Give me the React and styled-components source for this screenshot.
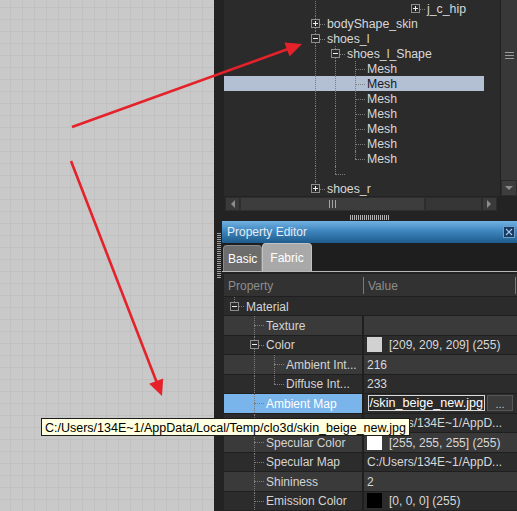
import React from 'react';
import styled, { createGlobalStyle } from 'styled-components';

const DOT = '#7d7d7d';

const GlobalStyle = createGlobalStyle`
    html, body {
        margin: 0;
        padding: 0;
    }
    body {
        background: #232323;
        font-family: "Liberation Sans", Arial, sans-serif;
        overflow: hidden;
    }
`;

const Screen = styled.div`
    position: relative;
    display: flex;
    width: 517px;
    height: 511px;
    overflow: hidden;
    background: #232323;
`;

const Canvas = styled.div`
    flex: none;
    width: 214px;
    background-color: #c9c9c9;
    background-image: linear-gradient(to right, #c1c1c1 1px, transparent 1px),
        linear-gradient(to bottom, #c1c1c1 1px, transparent 1px);
    background-size: 12px 12px;
    background-position: 10px 7px;
`;

const VSplitter = styled.div`
    flex: none;
    width: 8px;
    display: flex;
    align-items: center;
    padding-left: 3px;
    box-sizing: border-box;

    .grip {
        width: 4px;
        height: 46px;
        background: repeating-linear-gradient(to bottom, #a0a0a0 0 1px, transparent 1px 2px);
    }
`;

const Side = styled.div`
    flex: none;
    width: 295px;
    display: flex;
    flex-direction: column;
`;

/* ---------- tree ---------- */

const TreePanel = styled.div`
    flex: none;
    height: 212px;
    margin-left: 2px;
    display: flex;
    flex-direction: column;
`;

const TreeBody = styled.div`
    display: flex;
    height: 196px;
`;

const TreeView = styled.div`
    width: 276px;
    padding-top: 1px;
    box-sizing: border-box;
    background: #2b2b2b;
    overflow: hidden;
`;

const TreeRow = styled.div`
    display: flex;
    align-items: stretch;
    width: 260px;
    height: 15px;
    padding-left: 81px;
    box-sizing: border-box;
    background: ${(p) => (p.$selected ? '#b3bfd2' : 'transparent')};
    color: ${(p) => (p.$selected ? '#141a28' : '#d8d8d8')};
    font-size: 12.3px;
    line-height: 15px;
    white-space: nowrap;
`;

const Guide = styled.span`
    position: relative;
    flex: none;
    width: 20px;
    display: flex;
    align-items: center;

    &::before {
        content: '';
        display: ${(p) => (p.$up || p.$down ? 'block' : 'none')};
        position: absolute;
        left: 10px;
        top: ${(p) => (p.$up ? '0' : '50%')};
        bottom: ${(p) => (p.$down ? '0' : '50%')};
        border-left: 1px dotted ${DOT};
    }

    &::after {
        content: '';
        display: ${(p) => (p.$branch ? 'block' : 'none')};
        position: absolute;
        left: 10px;
        width: 10px;
        top: 50%;
        border-top: 1px dotted ${DOT};
    }
`;

const ToggleBox = styled.span`
    position: relative;
    z-index: 1;
    margin-left: 6px;
    width: 9px;
    height: 9px;
    box-sizing: border-box;
    border: 1px solid #8e8e8e;
    background: ${(p) => p.$bg};
    display: flex;

    svg {
        display: block;
    }
`;

const Label = styled.span`
    padding-left: 2px;
    padding-top: 1px;
    display: flex;
    align-items: center;
`;

const VScroll = styled.div`
    width: 17px;
    box-sizing: border-box;
    border-left: 1px solid #202020;
    background: #383838;
    display: flex;
    flex-direction: column;

    .thumb {
        flex: 1;
        display: flex;
        justify-content: center;
        padding-top: 52px;
    }

    .lines {
        width: 9px;
        height: 7px;
        background: repeating-linear-gradient(to bottom, #9a9a9a 0 1px, transparent 1px 3px);
    }

    .down {
        height: 14px;
        border: 1px solid #2b2b2b;
        background: #3d3d3d;
        display: flex;
        align-items: center;
        justify-content: center;
    }
`;

const HScroll = styled.div`
    display: flex;
    width: 272px;
    height: 14px;
    margin: 1px 0 0 1px;

    .btn {
        flex: none;
        width: 15px;
        background: #3a3a3a;
        border: 1px solid #2c2c2c;
        box-sizing: border-box;
        display: flex;
        align-items: center;
        justify-content: center;
    }

    .thumb {
        flex: none;
        width: 185px;
        background: #3d3d3d;
        border: 1px solid #2e2e2e;
        box-sizing: border-box;
        display: flex;
        align-items: center;
        justify-content: center;
    }

    .grip {
        width: 7px;
        height: 8px;
        background: repeating-linear-gradient(to right, #a5a5a5 0 1px, transparent 1px 3px);
    }

    .track {
        flex: 1;
        background: #363636;
        border: 1px solid #2c2c2c;
        box-sizing: border-box;
    }
`;

const HSplitter = styled.div`
    flex: none;
    height: 9px;
    display: flex;
    justify-content: center;
    padding-top: 3px;
    box-sizing: border-box;

    .grip {
        width: 39px;
        height: 5px;
        background: repeating-linear-gradient(to right, #b0b0b0 0 1px, transparent 1px 2px);
    }
`;

/* ---------- property editor ---------- */

const TitleBar = styled.div`
    flex: none;
    height: 22px;
    display: flex;
    align-items: center;
    justify-content: space-between;
    padding: 0 2px 0 5px;
    background: linear-gradient(to bottom, #72b2e3 0%, #3f86bf 45%, #1d5c8c 100%);
    color: #e4edf5;
    font-size: 12px;
`;

const CloseButton = styled.span`
    width: 12px;
    height: 12px;
    box-sizing: border-box;
    border: 1px solid #6f9ec6;
    background: #183a60;
    display: flex;
    align-items: center;
    justify-content: center;
`;

const TabStrip = styled.div`
    flex: none;
    height: 28px;
    display: flex;
    align-items: flex-end;
    padding-left: 1px;
    background: #1e1e1e;
    border-bottom: 1px solid #b8b8b8;
`;

const Tab = styled.div`
    box-sizing: border-box;
    height: ${(p) => (p.$active ? 28 : 26)}px;
    padding: 0 ${(p) => (p.$active ? 7 : 4)}px;
    display: flex;
    align-items: center;
    border: 1px solid ${(p) => (p.$active ? '#c2c2c2' : '#8a8a8a')};
    border-bottom: none;
    border-radius: 4px 4px 0 0;
    background: ${(p) => (p.$active ? '#a9a9a9' : '#6c6c6c')};
    color: #ffffff;
    font-size: 12px;
`;

const Table = styled.div`
    margin: 2px 0 0 2px;
    display: flex;
    flex-direction: column;
    gap: 1px;
    background: #1f1f1f;
    font-size: 12px;
`;

const HeaderRow = styled.div`
    height: 22px;
    display: flex;
    align-items: center;
    background: #323232;
    color: #8d8d8d;

    .cell {
        display: flex;
        align-items: center;
        padding: 1px 0 0 4px;
        box-sizing: border-box;
    }
    .rule {
        width: 1px;
        height: 17px;
        background: #7a7a7a;
    }
`;

const MaterialRow = styled.div`
    display: flex;
    align-items: stretch;
    height: 18px;
    background: #2b2b2b;
    color: #d6d6d6;
`;

const PropRow = styled.div`
    display: grid;
    grid-template-columns: 138px 1fr;
    column-gap: 2px;
    height: 18.5px;
`;

const TONES = {
    light: '#3a3a3a',
    dark: '#2c2c2c',
    selected: '#79b5ea',
};

const LabelCell = styled.div`
    display: flex;
    align-items: stretch;
    overflow: hidden;
    white-space: nowrap;
    background: ${(p) => TONES[p.$tone]};
    color: ${(p) => (p.$tone === 'selected' ? '#ffffff' : '#d4d4d4')};
`;

const ValueCell = styled.div`
    display: flex;
    align-items: center;
    gap: 7px;
    padding: 1px 0 0 3px;
    overflow: hidden;
    white-space: nowrap;
    background: ${(p) => (p.$tone === 'selected' ? '#2c2c2c' : TONES[p.$tone])};
    color: #d8d8d8;
`;

const Swatch = styled.span`
    flex: none;
    width: 15px;
    height: 15px;
    margin-top: -1px;
    background: ${(p) => p.$color};
`;

const Editor = styled.div`
    display: flex;
    align-items: center;
    gap: 2px;
    margin: -1px 0 0 1px;

    .input {
        width: 117px;
        height: 16px;
        box-sizing: border-box;
        border: 1px solid #d9d9d9;
        background: #2a2a2a;
        color: #ffffff;
        display: flex;
        justify-content: flex-end;
        align-items: center;
        overflow: hidden;
        padding-right: 1px;
        font-size: 12.6px;
    }

    .browse {
        width: 26px;
        height: 16px;
        box-sizing: border-box;
        border: 1px solid #575757;
        background: #3b3b3b;
        color: #c8c8c8;
        display: flex;
        align-items: flex-end;
        justify-content: center;
        line-height: 12px;
        font-size: 11px;
    }
`;

const Tooltip = styled.div`
    position: absolute;
    z-index: 3;
    left: 41px;
    top: 418px;
    height: 18px;
    box-sizing: border-box;
    padding: 1px 3px 0;
    display: flex;
    align-items: center;
    border: 1px solid #1c1c1c;
    background: #ffffe1;
    color: #000000;
    font-size: 12.5px;
    white-space: nowrap;
`;

const Arrows = styled.svg`
    position: absolute;
    z-index: 4;
    left: 0;
    top: 0;
    width: 517px;
    height: 511px;
    pointer-events: none;
`;

/* ---------- data ---------- */

const pass = { up: true, down: true };
const empty = {};

const TREE = [
    { guides: [pass, empty, empty, empty, empty], node: { branch: true }, toggle: 'plus', label: 'j_c_hip' },
    { guides: [], node: { up: true, down: true, branch: true }, toggle: 'plus', label: 'bodyShape_skin' },
    { guides: [], node: { up: true, down: true, branch: true }, toggle: 'minus', label: 'shoes_l' },
    { guides: [pass], node: { up: true, down: true, branch: true }, toggle: 'minus', label: 'shoes_l_Shape' },
    ...Array.from({ length: 7 }, (_, i) => ({
        guides: [pass, pass],
        node: { up: true, down: i < 6, branch: true },
        label: 'Mesh',
        selected: i === 1,
    })),
    { guides: [pass], node: { up: true, branch: true }, label: '' },
    { guides: [], node: { up: true, branch: true }, toggle: 'plus', label: 'shoes_r' },
];

const tee = { up: true, down: true, branch: true };
const last = { up: true, branch: true };

const PROPS = [
    { id: 'texture', label: 'Texture', guides: [empty], node: tee, tone: 'light' },
    { id: 'color', label: 'Color', guides: [empty], node: tee, toggle: 'minus', tone: 'dark', swatch: '#d1d1d1', value: '[209, 209, 209] (255)' },
    { id: 'ambient-int', label: 'Ambient Int...', guides: [empty, pass], node: tee, tone: 'light', value: '216' },
    { id: 'diffuse-int', label: 'Diffuse Int...', guides: [empty, pass], node: last, tone: 'dark', value: '233' },
    { id: 'ambient-map', label: 'Ambient Map', guides: [empty], node: tee, tone: 'selected', editor: '/skin_beige_new.jpg' },
    { id: 'diffuse-map', label: '', guides: [empty], node: tee, tone: 'dark', value: 'C:/Users/134E~1/AppD...' },
    { id: 'spec-color', label: 'Specular Color', guides: [empty], node: tee, tone: 'light', swatch: '#ffffff', value: '[255, 255, 255] (255)' },
    { id: 'spec-map', label: 'Specular Map', guides: [empty], node: tee, tone: 'dark', value: 'C:/Users/134E~1/AppD...' },
    { id: 'shininess', label: 'Shininess', guides: [empty], node: tee, tone: 'light', value: '2' },
    { id: 'emission', label: 'Emission Color', guides: [empty], node: tee, tone: 'dark', swatch: '#000000', value: '[0, 0, 0] (255)' },
];

const FULL_PATH = 'C:/Users/134E~1/AppData/Local/Temp/clo3d/skin_beige_new.jpg';

/* ---------- parts ---------- */

const Toggle = ({ kind, bg }) => (
    <ToggleBox $bg={bg}>
        <svg width="7" height="7" viewBox="0 0 7 7">
            <line x1="1" y1="3.5" x2="6" y2="3.5" stroke="#ececec" strokeWidth="1" />
            {kind === 'plus' && <line x1="3.5" y1="1" x2="3.5" y2="6" stroke="#ececec" strokeWidth="1" />}
        </svg>
    </ToggleBox>
);

const Branches = ({ guides, node, toggle, bg }) => (
    <>
        {guides.map((g, i) => (
            <Guide key={i} $up={g.up} $down={g.down} $branch={g.branch} />
        ))}
        <Guide $up={node.up} $down={node.down} $branch={node.branch}>
            {toggle && <Toggle kind={toggle} bg={bg} />}
        </Guide>
    </>
);

const Triangle = ({ dir }) => {
    const pts = {
        left: '5,0 5,8 1,4',
        right: '0,0 0,8 4,4',
        down: '0,0 8,0 4,4',
    }[dir];
    const size = dir === 'down' ? { w: 8, h: 4 } : { w: 5, h: 8 };
    return (
        <svg width={size.w} height={size.h} viewBox={`0 0 ${size.w} ${size.h}`}>
            <polygon points={pts} fill="#8c8c8c" />
        </svg>
    );
};

const App = () => {
    const treeRows = TREE.map((row, i) => (
        <TreeRow key={i} $selected={row.selected}>
            <Branches guides={row.guides} node={row.node} toggle={row.toggle} bg="#2b2b2b" />
            <Label>{row.label}</Label>
        </TreeRow>
    ));

    const propRows = PROPS.map((p) => (
        <PropRow key={p.id}>
            <LabelCell $tone={p.tone}>
                <Branches guides={p.guides} node={p.node} toggle={p.toggle} bg={TONES[p.tone]} />
                <Label>{p.label}</Label>
            </LabelCell>
            <ValueCell $tone={p.tone}>
                {p.swatch && <Swatch $color={p.swatch} />}
                {p.value && <span>{p.value}</span>}
                {p.editor && (
                    <Editor>
                        <div className="input">{p.editor}</div>
                        <div className="browse">...</div>
                    </Editor>
                )}
            </ValueCell>
        </PropRow>
    ));

    return (
        <Screen>
            <GlobalStyle />
            <Canvas />
            <VSplitter>
                <div className="grip" />
            </VSplitter>
            <Side>
                <TreePanel>
                    <TreeBody>
                        <TreeView>{treeRows}</TreeView>
                        <VScroll>
                            <div className="thumb">
                                <div className="lines" />
                            </div>
                            <div className="down">
                                <Triangle dir="down" />
                            </div>
                        </VScroll>
                    </TreeBody>
                    <HScroll>
                        <div className="btn">
                            <Triangle dir="left" />
                        </div>
                        <div className="thumb">
                            <div className="grip" />
                        </div>
                        <div className="track" />
                        <div className="btn">
                            <Triangle dir="right" />
                        </div>
                    </HScroll>
                </TreePanel>
                <HSplitter>
                    <div className="grip" />
                </HSplitter>
                <TitleBar>
                    <span>Property Editor</span>
                    <CloseButton>
                        <svg width="8" height="8" viewBox="0 0 8 8">
                            <path d="M1 1 L7 7 M7 1 L1 7" stroke="#9fcaee" strokeWidth="1.2" />
                        </svg>
                    </CloseButton>
                </TitleBar>
                <TabStrip>
                    <Tab>Basic</Tab>
                    <Tab $active>Fabric</Tab>
                </TabStrip>
                <Table>
                    <HeaderRow>
                        <div className="cell" style={{ width: 139 }}>Property</div>
                        <div className="rule" />
                        <div className="cell" style={{ width: 151 }}>Value</div>
                        <div className="rule" />
                    </HeaderRow>
                    <MaterialRow>
                        <Branches guides={[]} node={{ up: true, branch: true }} toggle="minus" bg="#2b2b2b" />
                        <Label>Material</Label>
                    </MaterialRow>
                    {propRows}
                </Table>
            </Side>
            <Tooltip>{FULL_PATH}</Tooltip>
            <Arrows viewBox="0 0 517 511">
                <line x1="72" y1="127" x2="288" y2="49" stroke="#e5212a" strokeWidth="2.6" />
                <polygon points="302,44 284.4,42.4 289.5,56.5" fill="#e5212a" />
                <line x1="71" y1="161" x2="157" y2="383" stroke="#e5212a" strokeWidth="2.6" />
                <polygon points="162,396 149.2,383.8 163.2,378.4" fill="#e5212a" />
            </Arrows>
        </Screen>
    );
};

export default App;
